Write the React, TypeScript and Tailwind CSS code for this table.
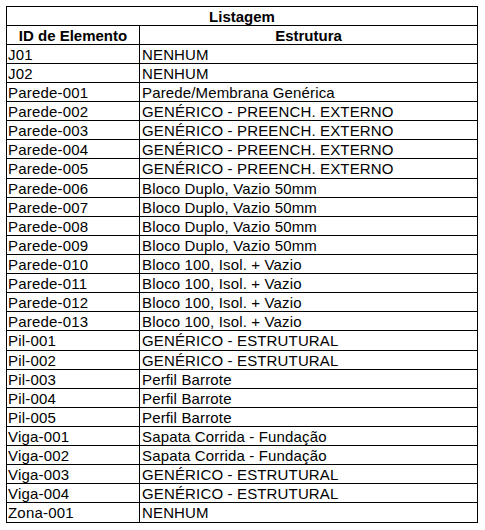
const rows: [string, string][] = [
  ["J01", "NENHUM"],
  ["J02", "NENHUM"],
  ["Parede-001", "Parede/Membrana Genérica"],
  ["Parede-002", "GENÉRICO - PREENCH. EXTERNO"],
  ["Parede-003", "GENÉRICO - PREENCH. EXTERNO"],
  ["Parede-004", "GENÉRICO - PREENCH. EXTERNO"],
  ["Parede-005", "GENÉRICO - PREENCH. EXTERNO"],
  ["Parede-006", "Bloco Duplo, Vazio 50mm"],
  ["Parede-007", "Bloco Duplo, Vazio 50mm"],
  ["Parede-008", "Bloco Duplo, Vazio 50mm"],
  ["Parede-009", "Bloco Duplo, Vazio 50mm"],
  ["Parede-010", "Bloco 100, Isol. + Vazio"],
  ["Parede-011", "Bloco 100, Isol. + Vazio"],
  ["Parede-012", "Bloco 100, Isol. + Vazio"],
  ["Parede-013", "Bloco 100, Isol. + Vazio"],
  ["Pil-001", "GENÉRICO - ESTRUTURAL"],
  ["Pil-002", "GENÉRICO - ESTRUTURAL"],
  ["Pil-003", "Perfil Barrote"],
  ["Pil-004", "Perfil Barrote"],
  ["Pil-005", "Perfil Barrote"],
  ["Viga-001", "Sapata Corrida - Fundação"],
  ["Viga-002", "Sapata Corrida - Fundação"],
  ["Viga-003", "GENÉRICO - ESTRUTURAL"],
  ["Viga-004", "GENÉRICO - ESTRUTURAL"],
  ["Zona-001", "NENHUM"],
];

// a few rows are one pixel taller, like the spreadsheet export
const tall = new Set([6, 15, 24]);

export default function App() {
  return (
    <div className="min-h-[530px] bg-white p-[6px] font-['Liberation_Sans',Arial,sans-serif] text-[15px] text-black">
      <div className="w-[472px] border-l border-t border-black">
        <div className="flex h-[19px] items-start justify-center border-b border-r border-black pt-[1px] font-bold leading-[17px]">
          Listagem
        </div>
        <div className="flex h-[19px] font-bold leading-[17px]">
          <div className="w-[133px] shrink-0 border-b border-r border-black pt-[1px] text-center">
            ID de Elemento
          </div>
          <div className="flex-1 border-b border-r border-black pt-[1px] text-center">
            Estrutura
          </div>
        </div>
        {rows.map(([id, estrutura], i) => (
          <div
            key={id}
            className={`flex leading-[17px] ${tall.has(i) ? "h-[20px]" : "h-[19px]"}`}
          >
            <div className="w-[133px] shrink-0 border-b border-r border-black pl-[1px] pt-[1px] tracking-[0.2px]">
              {id}
            </div>
            <div className="flex-1 border-b border-r border-black pl-[2px] pt-[1px] tracking-[0.15px]">
              {estrutura}
            </div>
          </div>
        ))}
      </div>
    </div>
  );
}
